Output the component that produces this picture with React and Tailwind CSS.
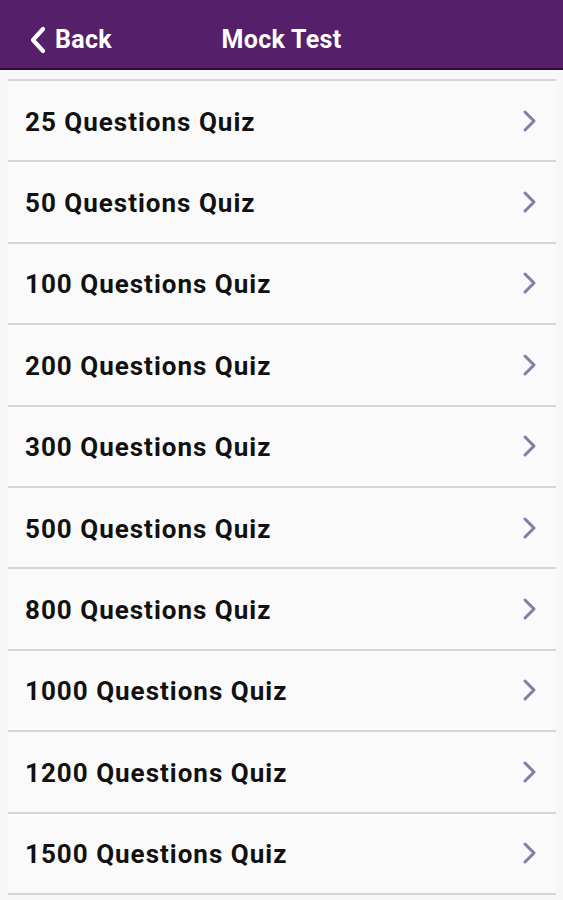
const quizzes = [25, 50, 100, 200, 300, 500, 800, 1000, 1200, 1500];

function Chevron({ className }) {
  return (
    <svg width="16" height="24" viewBox="0 0 16 24" className={className}>
      <polyline
        points="4,3 13,12 4,21"
        fill="none"
        stroke="currentColor"
        strokeWidth="3"
        strokeLinecap="round"
        strokeLinejoin="round"
      />
    </svg>
  );
}

export default function App() {
  return (
    <div className="min-h-[900px] w-[563px] overflow-hidden bg-[#f7f7f7] font-['Roboto',sans-serif]">
      <div className="relative flex h-[70px] items-center border-b-2 border-[#2b0d38] bg-[#561f69] pt-[12px] text-white">
        <div className="flex items-center pl-[29px]">
          <svg width="18" height="28" viewBox="0 0 18 28">
            <polyline
              points="14,3 4,14 14,25"
              fill="none"
              stroke="currentColor"
              strokeWidth="4.2"
              strokeLinecap="round"
              strokeLinejoin="round"
            />
          </svg>
          <span className="ml-[8px] text-[25px] font-bold tracking-[0.3px]">Back</span>
        </div>
        <span className="absolute left-1/2 top-[12px] flex h-[56px] -translate-x-1/2 items-center text-[25px] font-bold tracking-[0.3px]">
          Mock Test
        </span>
      </div>
      <div className="pt-[9px]">
        {quizzes.map((n) => (
          <div
            key={n}
            className="ml-[8px] mr-[7px] flex h-[81.4px] items-center justify-between border-t-2 border-[#d6d6d6] bg-[#fafafa] pl-[17px] pr-[19px] pt-[3px]"
          >
            <span className="text-[26px] font-bold tracking-[1px] text-[#111]">{n} Questions Quiz</span>
            <Chevron className="-mt-[3px] text-[#7d7fa6]" />
          </div>
        ))}
        <div className="ml-[8px] mr-[7px] border-t-2 border-[#d6d6d6]" />
      </div>
    </div>
  );
}
